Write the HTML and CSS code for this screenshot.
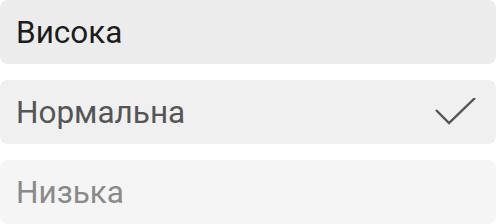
FILE: index.html
```html
<!DOCTYPE html>
<html lang="uk">
<head>
    <meta charset="UTF-8">
    <meta name="viewport" content="width=device-width, initial-scale=1.0">
    <title>Пріоритет</title>
    <link rel="stylesheet" href="styles.css">
</head>
<body>
    <div class="priority-list">
        <div class="priority-item high">
            <span class="priority-label">Висока</span>
        </div>
        <div class="priority-item normal selected">
            <span class="priority-label">Нормальна</span>
            <svg class="check" width="44" height="30" viewBox="0 0 44 30">
                <polyline points="2,12 15,25 41,0" fill="none" stroke="#555" stroke-width="2.4"/>
            </svg>
        </div>
        <div class="priority-item low">
            <span class="priority-label">Низька</span>
        </div>
    </div>
</body>
</html>
```

FILE: styles.css
```css
body {
    margin: 0;
    padding: 0;
    background-color: #ffffff;
    font-family: Roboto, "Noto Sans", sans-serif;
}
.priority-list {
    display: flex;
    flex-direction: column;
    gap: 16px;
    width: 496px;
}
.priority-item {
    height: 64px;
    border-radius: 8px;
    display: flex;
    align-items: center;
    justify-content: space-between;
    padding: 0 16px;
    box-sizing: border-box;
}
.priority-label {
    font-size: 31.5px;
}
.high {
    background-color: #ececec;
    color: #1c1c1c;
}
.normal {
    background-color: #f0f0f0;
    color: #555555;
}
.low {
    background-color: #f5f5f5;
    color: #8a8a8a;
}
.check {
    margin-right: 2px;
    margin-top: 2px;
}
```
